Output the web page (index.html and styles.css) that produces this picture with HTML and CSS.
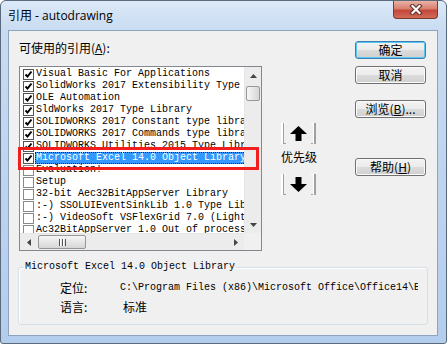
FILE: index.html
```html
<!DOCTYPE html>
<html lang="zh-CN">
<head>
    <meta charset="UTF-8">
    <title>引用 - autodrawing</title>
    <link rel="stylesheet" href="styles.css">
</head>
<body>
    <div class="window">
        <div class="titlebar">
            <span class="title">引用 - autodrawing</span>
            <div class="close">
                <svg width="14" height="11" viewBox="0 0 14 11">
                    <path d="M3.5 2L10.5 9M10.5 2L3.5 9" stroke="#5e2a24" stroke-width="4.2" stroke-linecap="square"/>
                    <path d="M3.5 2L10.5 9M10.5 2L3.5 9" stroke="#fff" stroke-width="2.2" stroke-linecap="square"/>
                </svg>
            </div>
        </div>

        <div class="client">
            <div class="top">
                <div class="left">
                    <div class="label">可使用的引用(<u>A</u>):</div>
                    <div class="listbox">
                        <div class="list-main">
                            <div class="items">
                                <div class="row"><span class="cb on"></span><span class="text">Visual Basic For Applications</span></div>
                                <div class="row"><span class="cb on"></span><span class="text">SolidWorks 2017 Extensibility Type Library</span></div>
                                <div class="row"><span class="cb on"></span><span class="text">OLE Automation</span></div>
                                <div class="row"><span class="cb on"></span><span class="text">SldWorks 2017 Type Library</span></div>
                                <div class="row"><span class="cb on"></span><span class="text">SOLIDWORKS 2017 Constant type library</span></div>
                                <div class="row"><span class="cb on"></span><span class="text">SOLIDWORKS 2017 Commands type library</span></div>
                                <div class="row"><span class="cb on"></span><span class="text">SOLIDWORKS Utilities 2015 Type Library</span></div>
                                <div class="row sel"><span class="cb on"></span><span class="text">Microsoft Excel 14.0 Object Library</span></div>
                                <div class="row"><span class="cb"></span><span class="text">Evaluation!</span></div>
                                <div class="row"><span class="cb"></span><span class="text">Setup</span></div>
                                <div class="row"><span class="cb"></span><span class="text">32-bit Aec32BitAppServer Library</span></div>
                                <div class="row"><span class="cb"></span><span class="text">:-) SSOLUIEventSinkLib 1.0 Type Library</span></div>
                                <div class="row"><span class="cb"></span><span class="text">:-) VideoSoft VSFlexGrid 7.0 (Light)</span></div>
                                <div class="row"><span class="cb"></span><span class="text">Ac32BitAppServer 1.0 Out of process</span></div>
                            </div>
                            <div class="vscroll">
                                <div class="sb-arrow">
                                    <svg width="7" height="4" viewBox="0 0 7 4"><path d="M0 4L3.5 0L7 4z" fill="#444"/></svg>
                                </div>
                                <div class="vthumb"></div>
                                <div class="sb-fill"></div>
                                <div class="sb-arrow">
                                    <svg width="7" height="4" viewBox="0 0 7 4"><path d="M0 0L3.5 4L7 0z" fill="#444"/></svg>
                                </div>
                            </div>
                        </div>
                        <div class="hbar">
                            <div class="hscroll">
                                <div class="sb-arrow">
                                    <svg width="4" height="7" viewBox="0 0 4 7"><path d="M4 0L0 3.5L4 7z" fill="#444"/></svg>
                                </div>
                                <div class="hthumb"><span class="grip"></span></div>
                                <div class="sb-fill"></div>
                                <div class="sb-arrow">
                                    <svg width="4" height="7" viewBox="0 0 4 7"><path d="M0 0L4 3.5L0 7z" fill="#444"/></svg>
                                </div>
                            </div>
                            <div class="corner"></div>
                        </div>
                        <div class="mark"></div>
                    </div>
                </div>

                <div class="priority">
                    <div class="arrow-btn">
                        <svg width="17" height="15" viewBox="0 0 17 15"><path d="M8.5 0L17 8H11.5V15H5.5V8H0z" fill="#000"/></svg>
                    </div>
                    <div class="prio-label">优先级</div>
                    <div class="arrow-btn">
                        <svg width="17" height="15" viewBox="0 0 17 15"><path d="M8.5 15L17 7H11.5V0H5.5V7H0z" fill="#000"/></svg>
                    </div>
                </div>

                <div class="buttons">
                    <div class="btn default">确定</div>
                    <div class="btn cancel">取消</div>
                    <div class="btn browse">浏览(<u>B</u>)...</div>
                    <div class="btn help">帮助(<u>H</u>)</div>
                </div>
            </div>

            <fieldset class="group">
                <legend>Microsoft Excel 14.0 Object Library</legend>
                <div class="info">
                    <span class="key">定位:</span>
                    <span class="path">C:\Program Files (x86)\Microsoft Office\Office14\EXCEL.EXE</span>
                    <span class="key">语言:</span>
                    <span class="lang">标准</span>
                </div>
            </fieldset>
        </div>
    </div>
</body>
</html>
```

FILE: styles.css
```css
body {
    margin: 0;
    font-family: "Noto Sans CJK SC", sans-serif;
    font-size: 12px;
    color: #000;
}

.window {
    width: 447px;
    height: 344px;
    box-sizing: border-box;
    border: 1px solid #5a6a7c;
    border-radius: 6px 6px 3px 3px;
    background: linear-gradient(#dce9f8, #c8dbf1 30px, #b3cdec);
    padding: 0 8px 7px 7px;
    display: flex;
    flex-direction: column;
}

.titlebar {
    height: 29px;
    display: flex;
    justify-content: space-between;
    flex: none;
}

.title {
    font-family: "Open Sans", "Noto Sans CJK SC", sans-serif;
    font-size: 12px;
    line-height: 29px;
}

.close {
    width: 45px;
    height: 18px;
    box-sizing: border-box;
    border: 1px solid #7c3a31;
    border-top: none;
    border-radius: 0 0 4px 4px;
    background: linear-gradient(#eab3a6, #d8806f 45%, #c4483a 55%, #d06a58);
    display: flex;
    align-items: center;
    justify-content: center;
}

.client {
    flex: none;
    height: 306px;
    box-sizing: border-box;
    border: 1px solid #8ea4bf;
    background: #f0f0f0;
    padding: 10px 11px 0 10px;
}

.top {
    display: flex;
}

.left {
    width: 243px;
}

.label {
    height: 14px;
    line-height: 14px;
}

.listbox {
    position: relative;
    margin-top: 11px;
    height: 185px;
    box-sizing: border-box;
    border: 1px solid #828790;
    background: #fff;
    display: flex;
    flex-direction: column;
}

.list-main {
    display: flex;
    height: 166px;
}

.items {
    flex: 1;
    min-width: 0;
    overflow: hidden;
    padding-top: 1px;
}

.row {
    height: 12px;
    display: flex;
    align-items: center;
    padding-left: 3px;
}

.cb {
    flex: none;
    width: 11px;
    height: 11px;
    box-sizing: border-box;
    border: 1px solid #8a8a8a;
    background: #fff;
    margin-right: 1px;
}

.cb.on {
    border-color: #555;
    background: #fff url("data:image/svg+xml,%3Csvg xmlns='http://www.w3.org/2000/svg' width='9' height='9'%3E%3Cpath d='M1.5 4.5L3.5 6.5L7.5 1.5' fill='none' stroke='%23000' stroke-width='2'/%3E%3C/svg%3E") no-repeat center;
}

.text {
    flex: 1;
    font-family: "Liberation Mono", monospace;
    font-size: 10px;
    line-height: 12px;
    white-space: nowrap;
    padding-left: 1px;
}

.row.sel .text {
    background: #3399ff;
    color: #fff;
    outline: 1px dotted #222;
    outline-offset: -1px;
}

.vscroll {
    flex: none;
    width: 17px;
    box-sizing: border-box;
    border-left: 1px solid #e6e6e6;
    background: #ececec;
    display: flex;
    flex-direction: column;
}

.sb-arrow {
    flex: none;
    width: 16px;
    height: 17px;
    display: flex;
    align-items: center;
    justify-content: center;
}

.sb-fill {
    flex: 1;
}

.vthumb {
    height: 15px;
    margin: 2px 1px 0 1px;
    box-sizing: border-box;
    border: 1px solid #979797;
    border-radius: 2px;
    background: linear-gradient(90deg, #f6f6f6, #e6e6e6 50%, #d6d6d6);
}

.hbar {
    display: flex;
    height: 17px;
}

.hscroll {
    flex: 1;
    display: flex;
    box-sizing: border-box;
    border-top: 1px solid #e6e6e6;
    background: #ececec;
}

.hscroll .sb-arrow {
    width: 17px;
    height: 16px;
}

.hthumb {
    width: 48px;
    margin: 1px 0 1px 1px;
    box-sizing: border-box;
    border: 1px solid #979797;
    border-radius: 2px;
    background: linear-gradient(#f6f6f6, #e6e6e6 50%, #d6d6d6);
    display: flex;
    align-items: center;
    justify-content: center;
}

.grip {
    width: 7px;
    height: 7px;
    background: repeating-linear-gradient(90deg, #555 0 1px, #fff 1px 2px, transparent 2px 3px);
}

.corner {
    width: 17px;
    background: #f0f0f0;
}

.mark {
    position: absolute;
    left: -2px;
    top: 80px;
    width: 241px;
    height: 23px;
    box-sizing: border-box;
    border: 3px solid #f21d1d;
}

.priority {
    width: 35px;
    margin-left: 19px;
    padding-top: 82px;
    display: flex;
    flex-direction: column;
}

.arrow-btn {
    height: 21px;
    box-sizing: border-box;
    border-left: 2px solid;
    border-right: 2px solid;
    border-color: #fff #a0a0a0 #a0a0a0 #fff;
    box-shadow: inset 1px 0 #a0a0a0, inset -1px 0 #fff;
    background:
        linear-gradient(90deg, #a0a0a0 0 3px, transparent 3px calc(100% - 3px), #a0a0a0 calc(100% - 3px)) bottom / 100% 1px no-repeat,
        linear-gradient(90deg, #fff 0 3px, transparent 3px calc(100% - 3px), #fff calc(100% - 3px)) top / 100% 1px no-repeat;
    display: flex;
    align-items: center;
    justify-content: center;
}

.prio-label {
    height: 30px;
    line-height: 26px;
    text-align: center;
    white-space: nowrap;
}

.buttons {
    width: 71px;
    margin-left: 39px;
    display: flex;
    flex-direction: column;
}

.btn {
    height: 18px;
    box-sizing: border-box;
    border: 1px solid #707070;
    border-radius: 3px;
    background: linear-gradient(#f3f3f3, #ebebeb 50%, #dcdcdc 50%, #cfcfcf);
    box-shadow: inset 0 0 0 1px #fbfbfb;
    text-align: center;
    line-height: 16px;
    white-space: nowrap;
}

.btn.default {
    border-color: #3c7fb1;
    box-shadow: inset 0 0 0 1px #58c8f3;
}

.btn.cancel {
    margin-top: 7px;
}

.btn.browse {
    margin-top: 16px;
}

.btn.help {
    margin-top: 40px;
}

.group {
    margin: 10px -2px 0 -1px;
    padding: 0;
    min-width: 0;
    border: 1px solid #d5dfe5;
    border-radius: 3px;
    box-shadow: inset 1px 1px #fff;
}

.group legend {
    font-family: "Liberation Mono", monospace;
    font-size: 10px;
    line-height: 12px;
    padding: 0 1px;
    margin-left: 5px;
}

.info {
    display: grid;
    grid-template-columns: 60px 1fr;
    padding: 5px 9px 8px 41px;
    line-height: 19px;
}

.path {
    font-family: "Liberation Mono", monospace;
    font-size: 10px;
    white-space: nowrap;
    overflow: hidden;
}

.lang {
    padding-left: 3px;
}
```
